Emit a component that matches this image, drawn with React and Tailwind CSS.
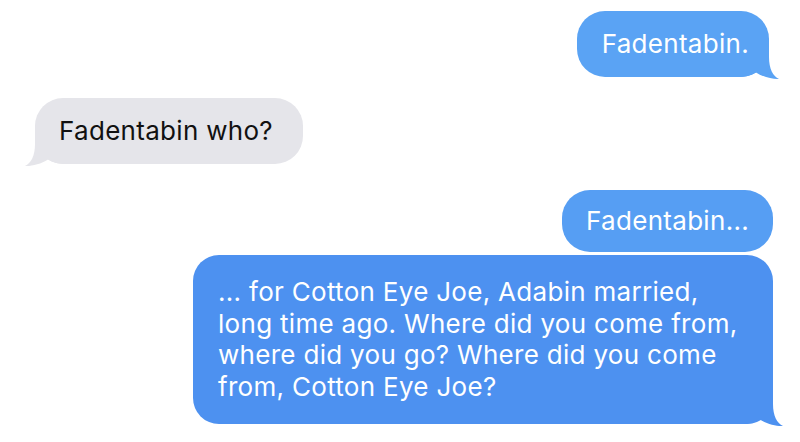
import React from "react";

const TAIL =
  "M0,0 L30,0 L30,10 C30,22 34,29 40,32 C34,32.5 24,30 17,25.5 C12,28.5 6,30 0,30 Z";

function TailRight({ color }) {
  return (
    <svg
      className="absolute right-[-12px] bottom-[-4px]"
      width="42"
      height="34"
      viewBox="0 0 42 34"
    >
      <path d={TAIL} fill={color} />
    </svg>
  );
}

function TailLeft({ color }) {
  return (
    <svg
      className="absolute left-[-12px] bottom-[-4px] -scale-x-100"
      width="42"
      height="34"
      viewBox="0 0 42 34"
    >
      <path d={TAIL} fill={color} />
    </svg>
  );
}

export default function App() {
  return (
    <div className="w-[800px] h-[442px] bg-white overflow-hidden flex flex-col font-['Inter','Liberation_Sans',sans-serif] text-[26px] leading-[30px] tracking-[0.3px]">
      <div className="flex justify-end pr-[31px] pt-[11px]">
        <div className="relative bg-[#5aa3f4] text-white rounded-[28px] pl-[25px] pr-[20px] py-[18px]">
          <span className="relative z-10">Fadentabin.</span>
          <TailRight color="#5aa3f4" />
        </div>
      </div>
      <div className="flex justify-start pl-[35px] mt-[21px]">
        <div className="relative bg-[#e5e5ea] text-[#111] rounded-[28px] pl-[24px] pr-[30px] py-[18px]">
          <span className="relative z-10">Fadentabin who?</span>
          <TailLeft color="#e5e5ea" />
        </div>
      </div>
      <div className="flex justify-end pr-[27px] mt-[26px]">
        <div className="relative bg-[#569ef3] text-white rounded-[28px] px-[24px] py-[16px]">
          Fadentabin...
        </div>
      </div>
      <div className="flex justify-end pr-[27px] mt-[3px]">
        <div className="relative bg-[#4d91f0] text-white rounded-[26px] pl-[25px] pr-[22px] pt-[21px] pb-[22px] w-[580px] leading-[31.5px]">
          <p className="relative z-10">
            ... for Cotton Eye Joe, Adabin married, long time ago. Where did
            you come from, where did you go? Where did you come from, Cotton
            Eye Joe?
          </p>
          <TailRight color="#4d91f0" />
        </div>
      </div>
    </div>
  );
}
